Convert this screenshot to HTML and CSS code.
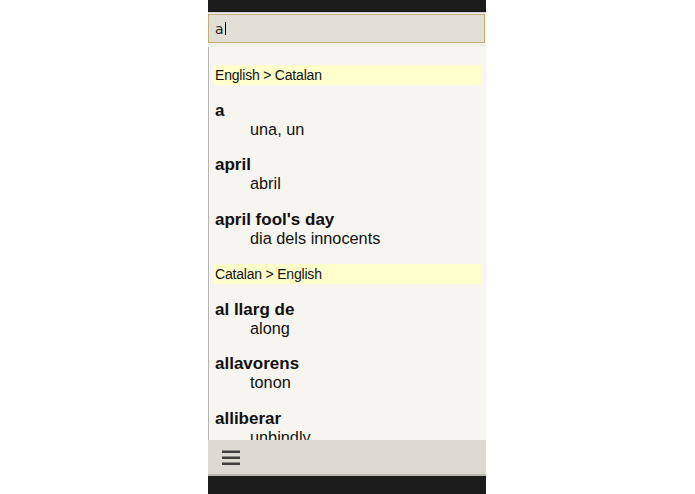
FILE: index.html
```html
<!DOCTYPE html>
<html>
<head>
<meta charset="utf-8">
<link rel="stylesheet" href="styles.css">
</head>
<body>
<div class="phone">
  <div class="statusbar"></div>
  <div class="topbar">
    <div class="search"><span class="query">a</span><span class="caret"></span></div>
  </div>
  <div class="content">
    <section class="section">
      <div class="dir">English &gt; Catalan</div>
      <div class="entry"><div class="word">a</div><div class="trans">una, un</div></div>
      <div class="entry"><div class="word">april</div><div class="trans">abril</div></div>
      <div class="entry"><div class="word">april fool's day</div><div class="trans">dia dels innocents</div></div>
    </section>
    <section class="section">
      <div class="dir">Catalan &gt; English</div>
      <div class="entry"><div class="word">al llarg de</div><div class="trans">along</div></div>
      <div class="entry"><div class="word">allavorens</div><div class="trans">tonon</div></div>
      <div class="entry"><div class="word">alliberar</div><div class="trans">unbindly</div></div>
    </section>
  </div>
  <div class="bottombar">
    <svg class="menu" width="18" height="16" viewBox="0 0 18 16">
      <rect x="0" y="0.5" width="18" height="2.5" fill="#3f3f3f"/>
      <rect x="0" y="6.5" width="18" height="2.5" fill="#3f3f3f"/>
      <rect x="0" y="12.5" width="18" height="2.5" fill="#3f3f3f"/>
    </svg>
  </div>
  <div class="navbar"></div>
</div>
</body>
</html>
```

FILE: styles.css
```css
html, body {
  margin: 0;
  padding: 0;
  background: #ffffff;
}
.phone {
  margin-left: 208px;
  width: 278px;
  height: 494px;
  display: flex;
  flex-direction: column;
  overflow: hidden;
}
.statusbar {
  height: 12px;
  background: #1c1c1c;
}
.topbar {
  height: 35px;
  box-sizing: border-box;
  padding: 2px 1px 4px 0;
  background: #f1efe9;
  border-top: 1px solid #cfcfcf;
}
.search {
  height: 29px;
  box-sizing: border-box;
  margin-top: -1px;
  border: 1px solid #c2b07c;
  background: #e2dfd7;
  display: flex;
  align-items: center;
  padding-left: 6px;
  font-family: "DejaVu Sans", sans-serif;
  font-size: 14px;
  color: #222;
}
.caret {
  display: inline-block;
  width: 1px;
  height: 13px;
  background: #000;
  margin-left: 1px;
}
.content {
  flex: 1;
  overflow: hidden;
  background: #f7f5ef;
  border-left: 1px solid #b4b4b0;
  padding: 18px 5px 0 5px;
  font-family: "Liberation Sans", Arial, sans-serif;
  color: #111;
}
.section {
  margin-bottom: 1px;
}
.dir {
  height: 20px;
  line-height: 20px;
  background: #ffffcc;
  font-size: 14px;
  padding-left: 1px;
  margin-bottom: 15.5px;
  letter-spacing: -0.2px;
}
.entry {
  margin-bottom: 16.5px;
  line-height: 19px;
}
.word {
  font-weight: bold;
  font-size: 17px;
  padding-left: 1px;
}
.trans {
  font-size: 16.3px;
  padding-left: 36px;
}
.bottombar {
  height: 36px;
  box-sizing: border-box;
  background: #dcdad3;
  border-bottom: 2px solid #b9b9b5;
  display: flex;
  align-items: flex-start;
  padding: 10px 0 0 14px;
}
.menu {
  display: block;
}
.navbar {
  height: 18px;
  background: #1c1c1c;
}
```
